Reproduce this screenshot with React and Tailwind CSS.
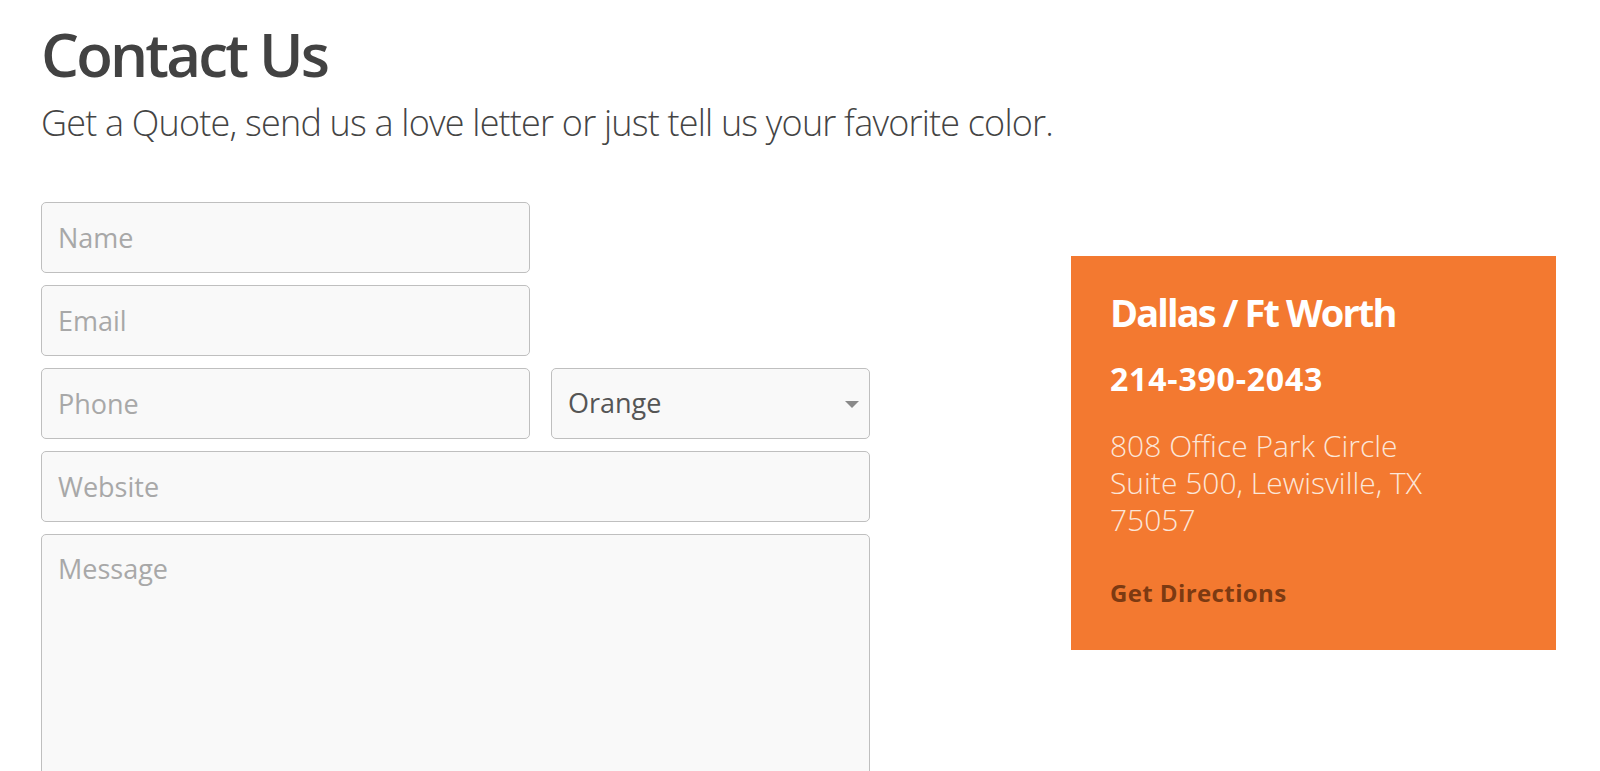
import React from 'react';

const inputClass =
  'block h-[71px] rounded-[5px] border border-[#bfbfbf] bg-[#f9f9f9] px-[16px] text-[27px] text-[#555] placeholder:text-[#a8a8a8] outline-none';

const App = () => {
  return (
    <div
      className="h-[771px] overflow-hidden bg-white pl-[41px] pr-[44px] pt-[22px] text-[#444]"
      style={{ fontFamily: '"Open Sans", "Liberation Sans", sans-serif' }}
    >
      <h1 className="text-[60px] leading-[64px] font-semibold tracking-[-2.8px] text-[#424242]">Contact Us</h1>
      <p className="mt-[19px] text-[36px] leading-[36px] font-light tracking-[-0.8px] text-[#444]">
        Get a Quote, send us a love letter or just tell us your favorite color.
      </p>

      <div className="mt-[61px] flex items-start justify-between">
        {/* form column */}
        <form className="flex w-[829px] flex-col gap-[12px]" onSubmit={(e) => e.preventDefault()}>
          <input type="text" placeholder="Name" className={`${inputClass} w-[489px]`} />
          <input type="email" placeholder="Email" className={`${inputClass} w-[489px]`} />
          <div className="flex gap-[21px]">
            <input type="tel" placeholder="Phone" className={`${inputClass} w-[489px]`} />
            <div className="relative w-[319px]">
              <select
                defaultValue="Orange"
                className={`${inputClass} w-full appearance-none pr-[40px]`}
              >
                <option>Red</option>
                <option>Orange</option>
                <option>Yellow</option>
                <option>Green</option>
                <option>Blue</option>
              </select>
              <svg
                className="pointer-events-none absolute right-[11px] top-[33px] h-[7px] w-[14px]"
                viewBox="0 0 14 7"
              >
                <path d="M0 0h14L7 7z" fill="#8a8a8a" />
              </svg>
            </div>
          </div>
          <input type="url" placeholder="Website" className={`${inputClass} w-full`} />
          <textarea
            placeholder="Message"
            className="block h-[320px] w-full resize-none rounded-[5px] border border-[#bfbfbf] bg-[#f9f9f9] px-[16px] pt-[15px] text-[27px] leading-[37px] text-[#555] placeholder:text-[#a8a8a8] outline-none"
          />
        </form>

        {/* location card */}
        <div className="mt-[54px] w-[485px] bg-[#f37930] pl-[39px] pr-[30px] pt-[33px] pb-[42px]">
          <h2 className="text-[38px] leading-[46px] font-bold tracking-[-1.9px] text-white">Dallas / Ft Worth</h2>
          <p className="mt-[25px] text-[32px] leading-[38px] font-bold tracking-[0.8px] text-white">214-390-2043</p>
          <p className="mt-[29px] text-[30px] leading-[37px] font-light text-[#fce6d8]">
            808 Office Park Circle
            <br />
            Suite 500, Lewisville, TX
            <br />
            75057
          </p>
          <a href="#" className="mt-[40px] block text-[24px] leading-[30px] font-bold tracking-[0.4px] text-[#7c3a12]">
            Get Directions
          </a>
        </div>
      </div>
    </div>
  );
};

export default App;
